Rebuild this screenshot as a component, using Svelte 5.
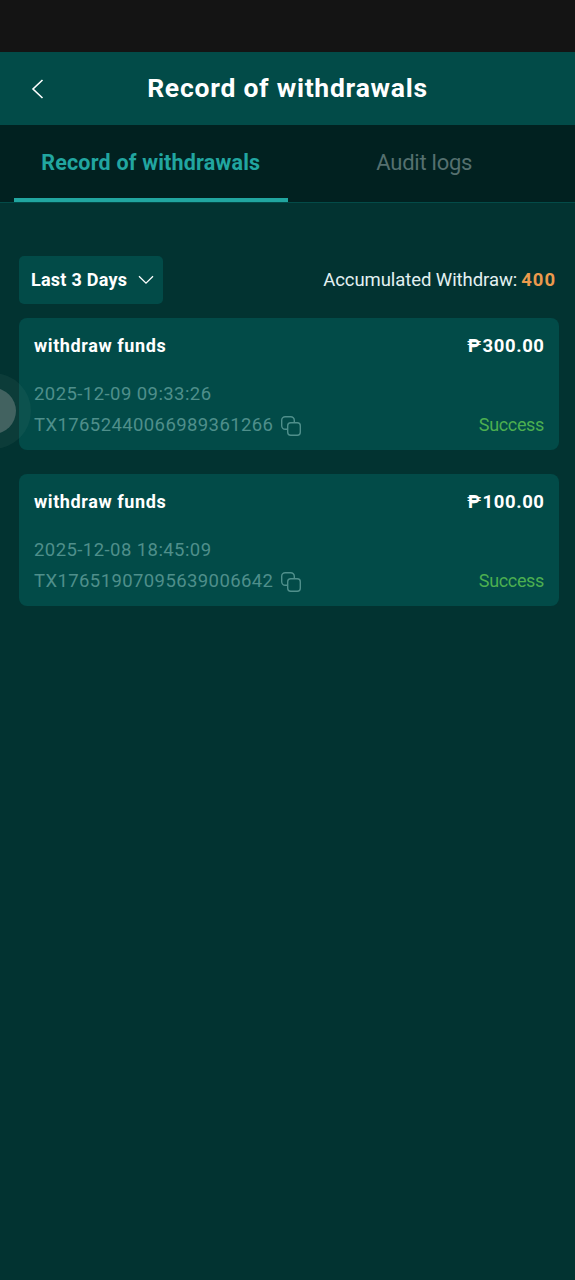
<script lang="ts">
	interface Withdrawal {
		id: string;
		title: string;
		amount: string;
		time: string;
		status: string;
	}

	const tabs = ['Record of withdrawals', 'Audit logs'];

	const records: Withdrawal[] = [
		{
			id: 'TX17652440066989361266',
			title: 'withdraw funds',
			amount: '300.00',
			time: '2025-12-09 09:33:26',
			status: 'Success'
		},
		{
			id: 'TX17651907095639006642',
			title: 'withdraw funds',
			amount: '100.00',
			time: '2025-12-08 18:45:09',
			status: 'Success'
		}
	];

	let activeTab = $state(0);
</script>

<div class="page">
	<div class="status-bar"></div>

	<header class="header">
		<button class="back" aria-label="Back">
			<svg width="14" height="20" viewBox="0 0 14 20" fill="none" stroke="currentColor" stroke-width="1.6">
				<path d="M11.5 1 L2 10 L11.5 19" />
			</svg>
		</button>
		<h1>Record of withdrawals</h1>
	</header>

	<div class="tabs" role="tablist">
		{#each tabs as tab, i}
			<button
				class="tab"
				class:active={activeTab === i}
				role="tab"
				aria-selected={activeTab === i}
				onclick={() => (activeTab = i)}
			>
				<span>{tab}</span>
			</button>
		{/each}
	</div>

	<main class="content">
		<div class="toolbar">
			<button class="filter">
				<span>Last 3 Days</span>
				<svg width="16" height="10" viewBox="0 0 16 10" fill="none" stroke="currentColor" stroke-width="1.3">
					<path d="M1 1.2 L8 8.2 L15 1.2" />
				</svg>
			</button>
			<div class="total"><span class="total-label">Accumulated Withdraw:</span><b>400</b></div>
		</div>

		{#each records as record (record.id)}
			<article class="card">
				<div class="row head">
					<span class="title">{record.title}</span>
					<span class="amount"><span class="peso">₱</span>{record.amount}</span>
				</div>
				<div class="row time">{record.time}</div>
				<div class="row foot">
					<div class="order">
						<span class="order-id">{record.id}</span>
						<button class="copy" aria-label="Copy">
							<svg width="22" height="22" viewBox="0 0 22 22" fill="none" stroke="currentColor" stroke-width="1.4">
								<rect x="7.7" y="7.7" width="12.6" height="12.6" rx="3" />
								<path d="M7.7 14.3H5.2a3.5 3.5 0 0 1-3.5-3.5V5.2a3.5 3.5 0 0 1 3.5-3.5h5.6a3.5 3.5 0 0 1 3.5 3.5v2.5" />
							</svg>
						</button>
					</div>
					<span class="status">{record.status}</span>
				</div>
			</article>
		{/each}
	</main>

	<div class="float-ball"></div>
</div>

<style>
	:global(body) {
		background: #023331;
	}

	.page {
		position: relative;
		min-height: 1280px;
		overflow: hidden;
		background: #023331;
		color: #fff;
		font-family: Roboto, 'Noto Sans', sans-serif;
		white-space: nowrap;
	}

	button {
		padding: 0;
		border: none;
		background: none;
		color: inherit;
		font: inherit;
		cursor: pointer;
	}

	svg {
		display: block;
	}

	.status-bar {
		height: 52px;
		background: #141414;
	}

	.header {
		display: grid;
		grid-template-columns: 60px 1fr 60px;
		align-items: center;
		height: 73px;
		background: #024b48;
	}

	.back {
		justify-self: start;
		margin-left: 31px;
	}

	h1 {
		margin: 0;
		padding-bottom: 2px;
		text-align: center;
		font-size: 26.5px;
		font-weight: 700;
		letter-spacing: 0.75px;
	}

	.tabs {
		display: flex;
		height: 77px;
		padding: 0 14px;
		border-bottom: 1px solid #034b48;
		background: #012120;
	}

	.tab {
		flex: 1;
		padding-top: 2px;
		border-bottom: 4px solid transparent;
		color: #55706f;
		font-size: 22px;
		letter-spacing: -0.25px;
	}

	.tab.active {
		border-color: #21a6a0;
		color: #21a6a0;
		font-size: 21.5px;
		font-weight: 700;
		letter-spacing: 0.2px;
	}

	.content {
		display: flex;
		flex-direction: column;
		padding: 53px 16px 0 19px;
	}

	.toolbar {
		display: flex;
		align-items: center;
		justify-content: space-between;
		height: 48px;
		margin-bottom: 14px;
		padding-right: 3px;
	}

	.filter {
		display: flex;
		align-items: center;
		justify-content: space-between;
		width: 144px;
		height: 48px;
		padding: 0 9px 0 12px;
		border-radius: 5px;
		background: #024b48;
		font-size: 18px;
		font-weight: 700;
		letter-spacing: 0.25px;
	}

	.filter span {
		padding-bottom: 2px;
	}

	.total {
		display: flex;
		gap: 4px;
		font-size: 18.5px;
	}

	.total-label {
		color: #e3f1f1;
		letter-spacing: -0.07px;
	}

	.total b {
		color: #ec9a4d;
		letter-spacing: 1px;
	}

	.card {
		box-sizing: border-box;
		height: 132px;
		margin-bottom: 24px;
		padding: 14px 15px 0;
		border-radius: 8px;
		background: #024b48;
		color: #4f8f8b;
		font-size: 18.5px;
	}

	.row {
		display: flex;
		align-items: center;
		justify-content: space-between;
		height: 28px;
	}

	.head {
		color: #fff;
		font-size: 18px;
		font-weight: 700;
	}

	.title {
		padding-bottom: 2px;
		letter-spacing: 0.6px;
	}

	.amount {
		margin-right: -0.6px;
		font-size: 18.5px;
		letter-spacing: 0.6px;
	}

	.peso {
		margin-right: 1px;
	}

	.time {
		height: 32px;
		margin-top: 18px;
		letter-spacing: 0.43px;
	}

	.foot {
		height: 31px;
	}

	.order {
		display: flex;
		align-items: center;
		gap: 7px;
	}

	.order-id {
		padding-bottom: 2px;
		letter-spacing: 0.4px;
	}

	.status {
		padding-bottom: 2px;
		color: #4caf50;
		font-size: 18px;
		letter-spacing: -0.35px;
	}

	.float-ball {
		position: absolute;
		top: 388px;
		left: -30px;
		width: 46px;
		height: 46px;
		border-radius: 50%;
		background: rgba(130, 145, 143, 0.5);
		box-shadow: 0 0 0 15px rgba(120, 150, 148, 0.09);
	}
</style>
